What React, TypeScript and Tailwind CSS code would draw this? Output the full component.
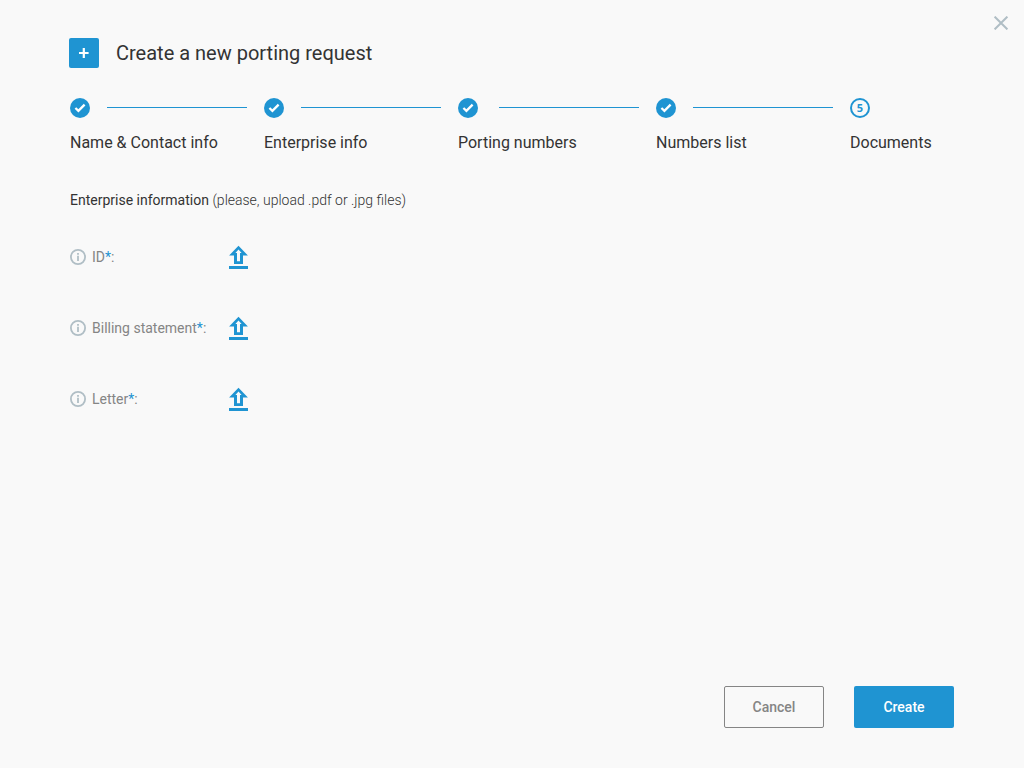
import { useId } from "react";

type Step = { label: string; done: boolean };

const steps: Step[] = [
  { label: "Name & Contact info", done: true },
  { label: "Enterprise info", done: true },
  { label: "Porting numbers", done: true },
  { label: "Numbers list", done: true },
  { label: "Documents", done: false },
];

const documents = ["ID", "Billing statement", "Letter"];

function CheckIcon() {
  return (
    <svg className="size-5 shrink-0" viewBox="0 0 20 20" aria-hidden="true">
      <circle cx="10" cy="10" r="10" fill="#1f94d2" />
      <path d="M5.4 10 8.4 12.8 14.6 6.6" fill="none" stroke="#fff" strokeWidth="2.3" />
    </svg>
  );
}

function InfoIcon() {
  return (
    <svg className="size-4 shrink-0" viewBox="0 0 16 16" aria-hidden="true">
      <circle cx="8" cy="8" r="7.1" fill="none" stroke="#b0bec5" strokeWidth="1.8" />
      <path d="M7.1 4h1.8v1.7H7.1zM7.1 6.8h1.8V12H7.1z" fill="#b0bec5" />
    </svg>
  );
}

function UploadIcon() {
  return (
    <svg className="h-6 w-5" viewBox="0 0 20 24" aria-hidden="true">
      <path
        fillRule="evenodd"
        fill="#1f94d2"
        d="M9.5 .8 18.9 10.4H14V19H5V10.4H.1ZM9.5 4.6 6.4 8H8V16.2H11V8H12.6Z"
      />
      <path d="M0 21h19v3H0z" fill="#1f94d2" />
    </svg>
  );
}

function UploadRow({ name }: { name: string }) {
  const id = useId();
  return (
    <div className="relative flex h-6 items-center">
      <label htmlFor={id} className="flex w-40 items-center gap-1.5 text-sm text-[#858585]">
        <InfoIcon />
        <span>
          {name}
          <span className="text-[#1f94d2]">*</span>:
        </span>
      </label>
      <input id={id} type="file" accept=".pdf,.jpg" className="peer sr-only" />
      <label
        htmlFor={id}
        aria-label={`Upload ${name}`}
        className="-ml-px cursor-pointer peer-focus-visible:outline-2"
      >
        <UploadIcon />
      </label>
    </div>
  );
}

export default function App() {
  return (
    <main className="relative flex min-h-screen flex-col bg-[#f9f9f9] px-[70px] pt-[38px] pb-10 font-['Roboto',sans-serif] text-[#333]">
      <button type="button" aria-label="Close" className="absolute top-4 right-4 cursor-pointer">
        <svg className="size-3.5" viewBox="0 0 14 14" aria-hidden="true">
          <path d="M.6.6 13.4 13.4M13.4.6.6 13.4" stroke="#b0bec5" strokeWidth="2" />
        </svg>
      </button>

      <header className="-ml-px flex items-center gap-[17px]">
        <span className="flex size-[30px] items-center justify-center rounded-xs bg-[#1f94d2]">
          <svg className="size-2.5" viewBox="0 0 10 10" aria-hidden="true">
            <path d="M4.8 0v10M0 5h9.6" stroke="#fff" strokeWidth="2.2" />
          </svg>
        </span>
        <h1 className="text-xl leading-[30px]">Create a new porting request</h1>
      </header>

      <ol className="mt-[30px] grid grid-cols-[194fr_194fr_198fr_194fr_104fr]">
        {steps.map((step, i) => (
          <li key={step.label}>
            <div className="flex h-5 items-center">
              {step.done ? (
                <CheckIcon />
              ) : (
                <span className="flex size-5 items-center justify-center rounded-full border-2 border-[#1f94d2] font-['Noto_Sans',sans-serif] text-[11px] leading-4 font-bold text-[#1f94d2]">
                  {i + 1}
                </span>
              )}
              {i < steps.length - 1 && (
                <span className="mr-[17px] mb-px ml-auto h-px w-[140px] bg-[#1f94d2]" />
              )}
            </div>
            <p className="mt-[13px] text-base leading-6 whitespace-nowrap">{step.label}</p>
          </li>
        ))}
      </ol>

      <section>
        <h2 className="mt-[35px] text-sm leading-5">
          Enterprise information{" "}
          <span className="font-light">(please, upload .pdf or .jpg files)</span>
        </h2>
        <div className="mt-[35px] flex flex-col gap-[47px]">
          {documents.map((name) => (
            <UploadRow key={name} name={name} />
          ))}
        </div>
      </section>

      <footer className="mt-auto flex justify-end gap-[30px] text-sm font-medium">
        <button
          type="button"
          className="h-[42px] w-[100px] cursor-pointer rounded-xs border border-[#858585] text-[#858585]"
        >
          Cancel
        </button>
        <button
          type="button"
          className="h-[42px] w-[100px] cursor-pointer rounded-xs bg-[#1f94d2] text-white"
        >
          Create
        </button>
      </footer>
    </main>
  );
}
